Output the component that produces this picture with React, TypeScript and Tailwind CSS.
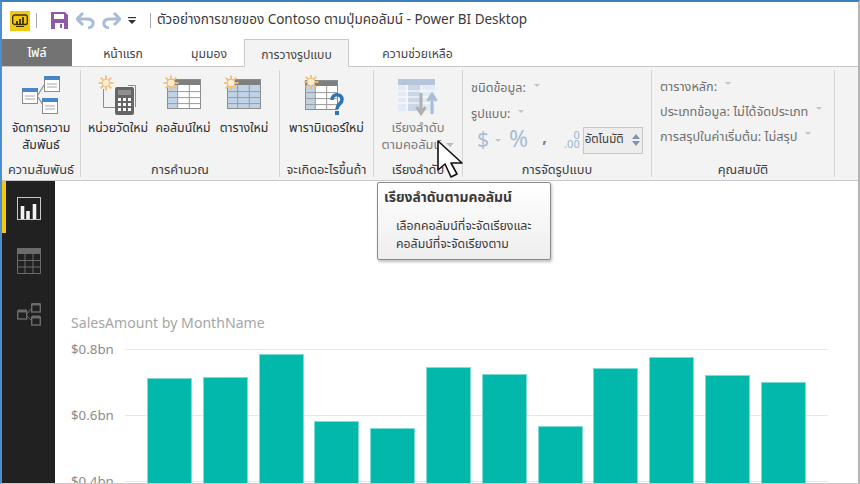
import type { ReactNode } from "react";

const bars = [
  { x: 22, top: 378 },
  { x: 78, top: 377 },
  { x: 134, top: 354 },
  { x: 189, top: 421 },
  { x: 245, top: 428 },
  { x: 301, top: 367 },
  { x: 357, top: 374 },
  { x: 413, top: 426 },
  { x: 468, top: 368 },
  { x: 524, top: 357 },
  { x: 580, top: 375 },
  { x: 636, top: 382 },
];

function Sun({ x, y }: { x: number; y: number }) {
  const rays = [0, 45, 90, 135];
  return (
    <g stroke="#f0bf78" strokeWidth="1.8">
      {rays.map((r) => (
        <line key={r} x1={x - 7.5} y1={y} x2={x + 7.5} y2={y} transform={`rotate(${r} ${x} ${y})`} />
      ))}
      <circle cx={x} cy={y} r="3.8" fill="#fbeedb" stroke="#f0bf78" strokeWidth="1" />
    </g>
  );
}

function GridTable({ x, y, w, h, blueAll }: { x: number; y: number; w: number; h: number; blueAll?: boolean }) {
  const colW = w / 3.2;
  return (
    <g>
      <rect x={x} y={y + 6} width={w} height={h - 6} fill={blueAll ? "#bfd3e6" : "#fff"} />
      {!blueAll && <rect x={x} y={y + 6} width={colW} height={h - 6} fill="#bfd3e6" />}
      <rect x={x} y={y} width={w} height={6} fill="#7f7f7f" />
      <rect x={x + 0.5} y={y + 0.5} width={w - 1} height={h - 1} fill="none" stroke="#8c8c8c" />
      <line x1={x + colW} y1={y + 6} x2={x + colW} y2={y + h} stroke="#9a9a9a" />
      <line x1={x + colW * 2.1} y1={y + 6} x2={x + colW * 2.1} y2={y + h} stroke="#9a9a9a" />
      {[0.42, 0.62, 0.82].map((f) => (
        <line key={f} x1={x} y1={y + h * f} x2={x + w} y2={y + h * f} stroke="#9a9a9a" />
      ))}
    </g>
  );
}

function MiniTable({ x, y }: { x: number; y: number }) {
  return (
    <g>
      <rect x={x + 0.5} y={y + 0.5} width="15" height="15" fill="#fff" stroke="#8c8c8c" />
      <rect x={x} y={y} width="16" height="4" fill="#4a86c5" />
      <line x1={x + 3} y1={y + 8} x2={x + 13} y2={y + 8} stroke="#a6a6a6" />
      <line x1={x + 3} y1={y + 11} x2={x + 13} y2={y + 11} stroke="#a6a6a6" />
    </g>
  );
}

const ManageIcon = () => (
  <svg width="40" height="42" viewBox="0 0 40 42">
    <path d="M17 20 L23 10 M17 22 L22 30" stroke="#8c8c8c" strokeWidth="1.2" fill="none" />
    <MiniTable x={23} y={1} />
    <MiniTable x={1} y={13} />
    <MiniTable x={21} y={23} />
  </svg>
);

const MeasureIcon = () => (
  <svg width="40" height="42" viewBox="0 0 40 42">
    <path d="M5.5 14 V32.5 H17 M30 10.5 H37.5 V32" stroke="#8c8c8c" fill="none" />
    <Sun x={8} y={8} />
    <rect x="17" y="12" width="19" height="28" rx="2" fill="#666" />
    <rect x="20" y="15" width="13" height="5" fill="#8f8f8f" />
    {[0, 1, 2].flatMap((r) =>
      [0, 1, 2].map((c) => <rect key={`${r}${c}`} x={20 + c * 5} y={23 + r * 5} width="3" height="3" fill="#fff" />)
    )}
  </svg>
);

const ColumnIcon = () => (
  <svg width="40" height="42" viewBox="0 0 40 42">
    <GridTable x={4} y={4} w={34} h={30} />
    <Sun x={8} y={8} />
  </svg>
);

const TableIcon = () => (
  <svg width="40" height="42" viewBox="0 0 40 42">
    <GridTable x={3} y={4} w={34} h={30} blueAll />
    <Sun x={7} y={8} />
  </svg>
);

const ParamIcon = () => (
  <svg width="45" height="42" viewBox="0 0 45 42">
    <GridTable x={1} y={5} w={33} h={30} />
    <Sun x={7} y={7} />
    <path d="M28 25 C28 18 38 18 38 24.5 C38 29.5 33 28.5 33 34" stroke="#2e75b6" strokeWidth="3.6" fill="none" />
    <rect x="31" y="36" width="4" height="4" fill="#2e75b6" />
  </svg>
);

const SortIcon = () => (
  <svg width="40" height="42" viewBox="0 0 40 42">
    <rect x="0" y="4" width="37" height="32" fill="#e3eaf3" />
    <rect x="0" y="4" width="37" height="6" fill="#b5c5da" />
    <rect x="10" y="10" width="13" height="26" fill="#cad7e7" />
    {[16, 22, 28].map((y) => (
      <line key={y} x1="0" y1={y} x2="37" y2={y} stroke="#fff" />
    ))}
    <path d="M9 10 V36 M23 10 V36" stroke="#fff" />
    <path d="M23 18 V38 M18.5 32 L23 38.5 L27.5 32" stroke="#b0b0b0" strokeWidth="3" fill="none" />
    <path d="M34 39 V20 M29.5 26 L34 19.5 L38.5 26" stroke="#a9bcd6" strokeWidth="3" fill="none" />
  </svg>
);

const Arrow = ({ light }: { light?: boolean }) => (
  <span
    className={
      light
        ? "inline-block ml-[8px] align-middle border-x-[3.5px] border-t-[3.5px] border-x-transparent border-t-[#c4c4c4] mb-[7px]"
        : "inline-block ml-[5px] align-middle border-x-[4px] border-t-[4px] border-x-transparent border-t-[#bdbdbd]"
    }
  />
);

function RibbonButton({ width, icon, children, gray }: { width: string; icon: ReactNode; children: ReactNode; gray?: boolean }) {
  return (
    <div className={`${width} flex flex-col items-center ${gray ? "text-[#7b7b7b] text-[12.9px]" : "text-[#2b2b2b] text-[12.3px]"}`}>
      <div className="h-[45px] flex items-start">{icon}</div>
      <div className="text-center leading-[17px] whitespace-nowrap">{children}</div>
    </div>
  );
}

function Group({ width, label, children }: { width: string; label: string; children: ReactNode }) {
  return (
    <div className={`${width} my-[3px] border-r border-[#d4d4d4] flex flex-col shrink-0`}>
      <div className="flex-1 pt-[5px] min-h-0">{children}</div>
      <div className="h-[14px] leading-[14px] text-center whitespace-nowrap text-[12.8px] text-[#3c3c3c]">{label}</div>
    </div>
  );
}

function Tab({ width, active, file, children }: { width: string; active?: boolean; file?: boolean; children: ReactNode }) {
  if (file)
    return <div className={`${width} bg-[#737373] text-white font-medium pt-[2px] flex items-center justify-center`}>{children}</div>;
  if (active)
    return (
      <div className={`${width} h-[28px] pt-[3px] bg-[#f3f3f3] border border-b-0 border-[#c8c8c8] flex items-center justify-center relative z-10`}>
        {children}
      </div>
    );
  return <div className={`${width} pt-[3px] flex items-center justify-center`}>{children}</div>;
}

export default function App() {
  return (
    <div
      className="relative w-[860px] h-[484px] overflow-hidden bg-white flex flex-col border-t-2 border-l-2 border-r-2 border-b border-t-[#3d80bd] border-l-[#4a8fd0] border-r-[#b4b4b4] border-b-[#c8c8c8] text-[12px] text-[#333]"
      style={{ fontFamily: '"Noto Sans Thai", "Open Sans", "Noto Sans", "DejaVu Sans", sans-serif' }}
    >
      {/* Title bar */}
      <div className="h-[37px] flex items-center shrink-0 pl-[8px]">
        <div className="w-[20px] h-[20px] bg-[#f2c811] flex items-center justify-center">
          <svg width="16" height="14" viewBox="0 0 16 14">
            <rect x="0.7" y="1" width="14.6" height="9.5" rx="2" fill="none" stroke="#3a3000" strokeWidth="1.3" />
            <path d="M5 11 V7 M8 11 V5 M11 11 V3" stroke="#3a3000" strokeWidth="1.8" />
            <path d="M4 12.5 H12" stroke="#3a3000" />
          </svg>
        </div>
        <div className="w-px h-[15px] bg-[#a8a8a8] ml-[6px]" />
        <svg className="ml-[14px]" width="17" height="17" viewBox="0 0 17 17">
          <path d="M0 0 H14 L17 3 V17 H0 Z" fill="#8c5aa8" />
          <rect x="3" y="2" width="10" height="5" fill="#fff" />
          <rect x="4" y="11" width="9" height="6" fill="#fff" />
          <rect x="9" y="12" width="2" height="4" fill="#8c5aa8" />
        </svg>
        <svg className="ml-[8px]" width="19" height="17" viewBox="0 0 19 17">
          <path d="M2 7 H11 C19 7 19 15 12 16" stroke="#a9bcd6" strokeWidth="3" fill="none" />
          <path d="M7 1 L1 7 L7 13" stroke="#a9bcd6" strokeWidth="3" fill="none" />
        </svg>
        <svg className="ml-[7px]" width="19" height="17" viewBox="0 0 19 17">
          <path d="M17 7 H8 C0 7 0 15 7 16" stroke="#a9bcd6" strokeWidth="3" fill="none" />
          <path d="M12 1 L18 7 L12 13" stroke="#a9bcd6" strokeWidth="3" fill="none" />
        </svg>
        <svg className="ml-[7px]" width="8" height="7" viewBox="0 0 8 7">
          <rect x="0" y="0" width="8" height="1.2" fill="#333" />
          <path d="M0 3 H8 L4 7 Z" fill="#333" />
        </svg>
        <div className="w-px h-[15px] bg-[#a8a8a8] ml-[14px]" />
        <div className="ml-[6px] text-[13.5px] text-[#3a3a3a] whitespace-nowrap">
          ตัวอย่างการขายของ Contoso ตามปุ่มคอลัมน์ - Power BI Desktop
        </div>
      </div>

      {/* Tabs */}
      <div className="h-[28px] flex shrink-0 border-b border-[#c8c8c8] text-[12.2px] text-[#444]">
        <Tab width="w-[70px]" file>ไฟล์</Tab>
        <Tab width="w-[102px]">หน้าแรก</Tab>
        <Tab width="w-[70px]">มุมมอง</Tab>
        <Tab width="w-[105px]" active>การวางรูปแบบ</Tab>
        <Tab width="w-[137px]">ความช่วยเหลือ</Tab>
      </div>

      {/* Ribbon */}
      <div className="h-[114px] flex shrink-0 bg-[#f3f3f3] border-b border-[#c8c8c8]">
        <Group width="w-[79px]" label="ความสัมพันธ์">
          <RibbonButton width="w-full" icon={<ManageIcon />}>
            จัดการความ
            <br />
            สัมพันธ์
          </RibbonButton>
        </Group>
        <Group width="w-[199px]" label="การคำนวณ">
          <div className="flex pl-[5px] gap-[2px]">
            <RibbonButton width="w-[64px]" icon={<MeasureIcon />}>หน่วยวัดใหม่</RibbonButton>
            <RibbonButton width="w-[62px]" icon={<ColumnIcon />}>คอลัมน์ใหม่</RibbonButton>
            <RibbonButton width="w-[56px]" icon={<TableIcon />}>ตารางใหม่</RibbonButton>
          </div>
        </Group>
        <Group width="w-[94px]" label="จะเกิดอะไรขึ้นถ้า">
          <RibbonButton width="w-full" icon={<ParamIcon />}>พารามิเตอร์ใหม่</RibbonButton>
        </Group>
        <Group width="w-[89px]" label="เรียงลำดับ">
          <RibbonButton width="w-full" gray icon={<SortIcon />}>
            เรียงลำดับ
            <br />
            ตามคอลัมน์
            <Arrow />
          </RibbonButton>
        </Group>
        <Group width="w-[189px]" label="การจัดรูปแบบ">
          <div className="pl-[8px] text-[12.6px] text-[#6f6f6f] flex flex-col">
            <div className="h-[26px] mt-[1px] leading-[26px]">ชนิดข้อมูล:<Arrow light /></div>
            <div className="h-[26px] leading-[26px]">รูปแบบ:<Arrow light /></div>
            <div className="flex items-center h-[28px] mt-[-2px]">
              <span className="ml-[6px] text-[21px] leading-none text-[#a9bcd6]">$</span>
              <span className="ml-[6px] border-x-[3px] border-t-[3px] border-x-transparent border-t-[#c4c4c4]" />
              <span className="ml-[8px] text-[23px] leading-none text-[#a9bcd6]">%</span>
              <span className="ml-[14px] text-[16px] leading-none font-bold text-[#6f7f95] mb-[4px]">,</span>
              <span className="ml-[13px] w-[20px] text-[11px] font-medium leading-[9px] text-[#a9bcd6] text-right">
                0
                <br />
                .00
              </span>
              <div className="ml-[3px] w-[60px] h-[27px] bg-[#ededed] border border-[#c6c6c6] text-[#3a3a3a] flex items-center justify-between pl-[1px] pr-[2px] text-[11.5px]">
                อัตโนมัติ
                <svg width="8" height="12" viewBox="0 0 8 12">
                  <path d="M0 5 L4 0 L8 5 Z M0 7 L4 12 L8 7 Z" fill="#7f93ad" />
                </svg>
              </div>
            </div>
          </div>
        </Group>
        <Group width="w-[183px]" label="คุณสมบัติ">
          <div className="pl-[8px] text-[12.7px] text-[#6f6f6f] flex flex-col">
            <div className="h-[25px] leading-[25px] whitespace-nowrap">ตารางหลัก:<Arrow light /></div>
            <div className="h-[25px] leading-[25px] whitespace-nowrap">ประเภทข้อมูล: ไม่ได้จัดประเภท<Arrow light /></div>
            <div className="h-[25px] leading-[25px] whitespace-nowrap">การสรุปในค่าเริ่มต้น: ไม่สรุป<Arrow light /></div>
          </div>
        </Group>
      </div>

      {/* Main */}
      <div className="flex-1 flex min-h-0">
        <div className="w-[53px] bg-[#212121] shrink-0 relative flex flex-col items-center pl-[1px]">
          <div className="absolute left-0 top-0 w-[4px] h-[52px] bg-[#f2c811]" />
          <svg className="mt-[16px]" width="24" height="24" viewBox="0 0 24 24">
            <rect x="0.5" y="0.5" width="23" height="22" fill="none" stroke="#c8c8c8" />
            <path d="M5.5 22 V9 M11 22 V14 M17.5 22 V7" stroke="#f2f2f2" strokeWidth="3.6" />
          </svg>
          <svg className="mt-[27px]" width="24" height="26" viewBox="0 0 24 26">
            <rect x="0" y="0" width="24" height="6" fill="#6b6b6b" />
            <path d="M0.5 6 V25.5 H23.5 V6 M8 6 V25 M16 6 V25 M0 12.5 H24 M0 19 H24" stroke="#6b6b6b" fill="none" />
          </svg>
          <svg className="mt-[29px]" width="24" height="24" viewBox="0 0 24 24">
            <path d="M10 11 L14 6 M10 13 L14 17" stroke="#6b6b6b" />
            <g fill="none" stroke="#6b6b6b" strokeWidth="1.4">
              <rect x="0.7" y="8" width="9" height="8" />
              <rect x="14.7" y="1" width="8.6" height="8" />
              <rect x="14.7" y="14" width="8.6" height="8" />
            </g>
            <path d="M1 8 H10 M15 1 H23 M15 14 H23" stroke="#6b6b6b" strokeWidth="3" />
          </svg>
        </div>

        <div className="flex-1 pl-[16px] pt-[133px] min-w-0 overflow-hidden">
          <div className="text-[14.1px] leading-[19px] text-[#a6a6a6]">SalesAmount by MonthName</div>
          <div className="flex mt-[16px]">
            <div className="w-[54px] shrink-0 text-[13.3px] text-[#8c8c8c] mt-[-8px]">
              <div className="h-[66px] leading-[18px]">$0.8bn</div>
              <div className="h-[66px] leading-[18px]">$0.6bn</div>
              <div className="h-[66px] leading-[18px]">$0.4bn</div>
            </div>
            <svg width="703" height="134" viewBox="0 349 703 134" className="shrink-0">
              {[349.5, 415.5, 481.5].map((y) => (
                <line key={y} x1="0" y1={y} x2="703" y2={y} stroke="#e8e8e8" />
              ))}
              {bars.map((b) => (
                <rect
                  key={b.x}
                  x={b.x + 0.5}
                  y={b.top + 0.5}
                  width="44"
                  height={484 - b.top}
                  fill="#01b8aa"
                  stroke="#7fdcd4"
                  strokeWidth="1"
                />
              ))}
            </svg>
          </div>
        </div>
      </div>

      {/* Tooltip */}
      <div className="absolute left-[375px] top-[180px] w-[174px] h-[78px] rounded-[2px] border border-[#8a8a8a] bg-linear-to-b from-white to-[#eeeeee] shadow-[1px_2px_3px_rgba(0,0,0,0.25)] px-[6px] text-[#3a3a3a] z-20">
        <div className="mt-[6px] text-[13.9px] font-bold leading-[18px] whitespace-nowrap">เรียงลำดับตามคอลัมน์</div>
        <div className="mt-[11px] ml-[12px] text-[12.3px] leading-[18px] whitespace-nowrap">
          เลือกคอลัมน์ที่จะจัดเรียงและ
          <br />
          คอลัมน์ที่จะจัดเรียงตาม
        </div>
      </div>

      {/* Cursor */}
      <svg className="absolute left-[434px] top-[137px] z-30" width="30" height="42" viewBox="0 0 30 42">
        <path d="M2 2 V31 L9 25 L15 38 L21 35 L15 24 L26 24 Z" fill="#fff" stroke="#111" strokeWidth="1.6" strokeLinejoin="round" />
      </svg>
    </div>
  );
}
